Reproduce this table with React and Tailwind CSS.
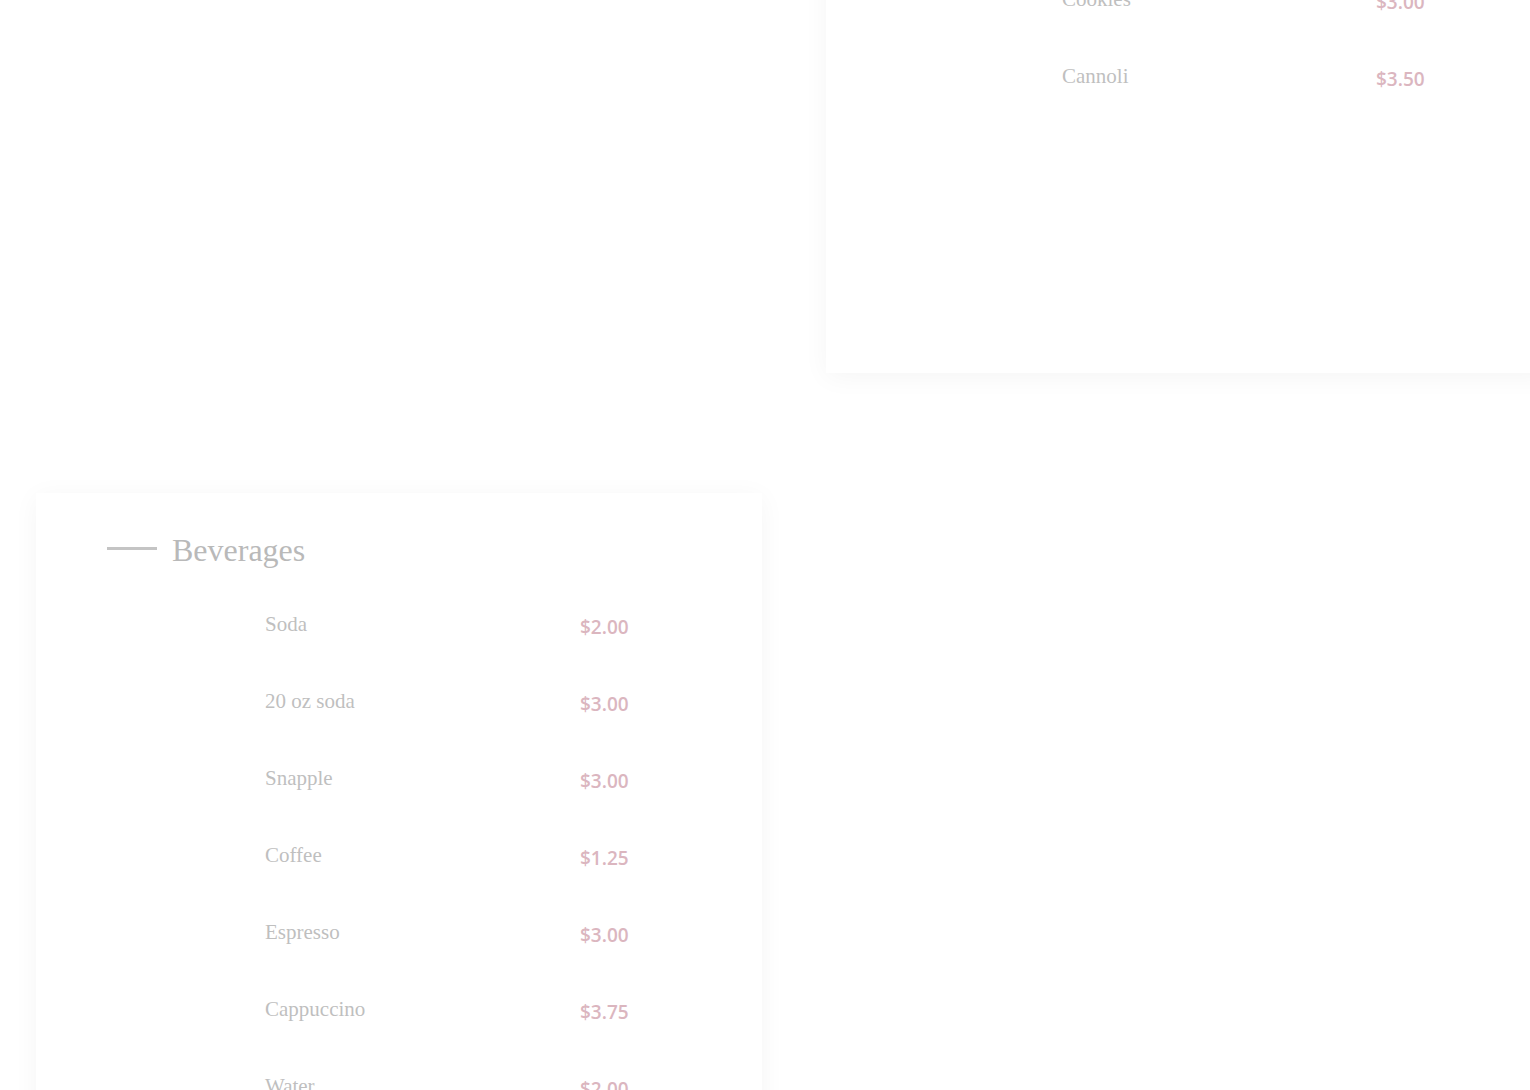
const desserts = [
  { name: 'Cookies', price: '$3.00' },
  { name: 'Cannoli', price: '$3.50' },
];

const beverages = [
  { name: 'Soda', price: '$2.00' },
  { name: '20 oz soda', price: '$3.00' },
  { name: 'Snapple', price: '$3.00' },
  { name: 'Coffee', price: '$1.25' },
  { name: 'Espresso', price: '$3.00' },
  { name: 'Cappuccino', price: '$3.75' },
  { name: 'Water', price: '$2.00' },
];

function MenuRow({ item, nameCol }) {
  return (
    <div className="flex h-[77px] items-start">
      <div className={nameCol}>
        <span className="font-['Liberation_Serif',serif] text-[21px] leading-[28px] text-[#bfbfbf]">
          {item.name}
        </span>
      </div>
      <span className="mt-[3px] font-['Open_Sans',sans-serif] text-[19px] font-semibold leading-[28px] text-[#dbb6bf]">
        {item.price}
      </span>
    </div>
  );
}

export default function App() {
  return (
    <div className="h-[1090px] w-[1530px] overflow-hidden bg-white">
      <div className="-mt-[40px] w-[1552px] px-[36px]">
        {/* top row: left column empty, dessert card on the right */}
        <div className="flex gap-[64px]">
          <div className="w-[726px] shrink-0" />
          <div className="w-[726px] shrink-0 bg-white pt-[25px] pb-[234px] shadow-[0_4px_25px_rgba(0,0,0,0.045)]">
            {desserts.map((item) => (
              <MenuRow key={item.name} item={item} nameCol="ml-[236px] w-[314px] shrink-0" />
            ))}
          </div>
        </div>

        <div className="mt-[120px] flex gap-[64px]">
          <div className="w-[726px] shrink-0 bg-white pt-[37px] pb-[40px] shadow-[0_4px_25px_rgba(0,0,0,0.045)]">
            <div className="flex h-[40px] items-center pl-[71px]">
              <div className="mt-[-3px] h-[3px] w-[50px] bg-[#c4c4c4]" />
              <h2 className="ml-[15px] font-['Liberation_Serif',serif] text-[32px] leading-[40px] text-[#b9b9b9]">
                Beverages
              </h2>
            </div>
            <div className="mt-[40px]">
              {beverages.map((item) => (
                <MenuRow key={item.name} item={item} nameCol="ml-[229px] w-[315px] shrink-0" />
              ))}
            </div>
          </div>
        </div>
      </div>
    </div>
  );
}
